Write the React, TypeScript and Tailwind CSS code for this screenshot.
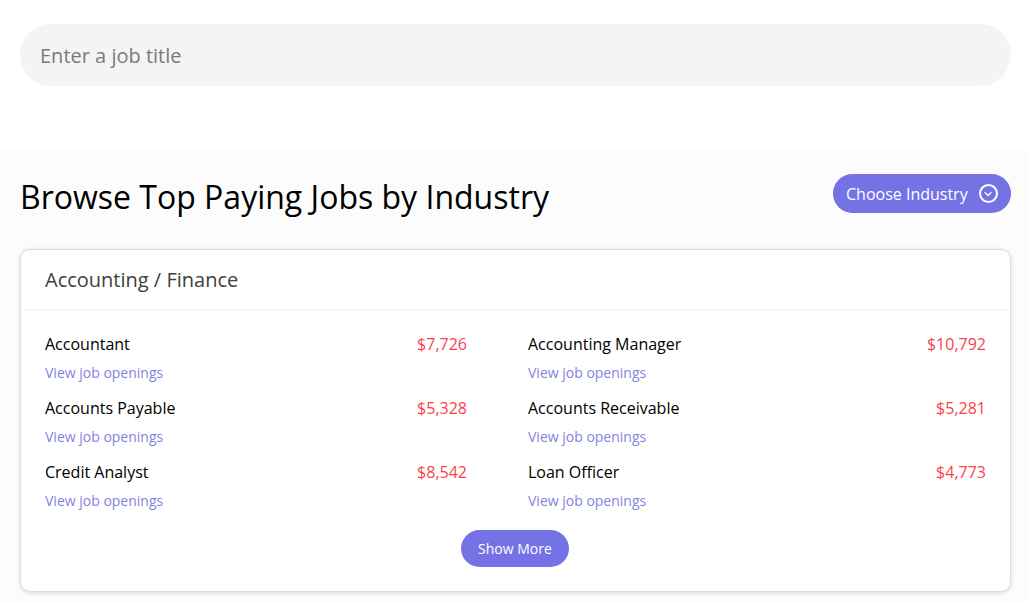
import React from 'react';
import { ChevronDown } from 'lucide-react';

const jobs = [
    { title: 'Accountant', pay: '$7,726' },
    { title: 'Accounting Manager', pay: '$10,792' },
    { title: 'Accounts Payable', pay: '$5,328' },
    { title: 'Accounts Receivable', pay: '$5,281' },
    { title: 'Credit Analyst', pay: '$8,542' },
    { title: 'Loan Officer', pay: '$4,773' },
];

const App: React.FC = () => {
    return (
        <div className="h-[602px] overflow-hidden bg-white font-['Open_Sans',sans-serif]">
            <div className="h-[150px] px-5 pt-6">
                <div className="h-[62px] w-[991px] rounded-full bg-[#f4f4f4] pl-5 pt-[2px] flex items-center text-[20px] text-[#7a7a7a]">
                    Enter a job title
                </div>
            </div>
            <div className="h-[452px] bg-[#fcfcfc] px-5">
                <div className="h-[99px] flex justify-between pt-6 w-[991px]">
                    <h1 className="text-[32px] leading-[46px] text-black">Browse Top Paying Jobs by Industry</h1>
                    <button className="h-[39px] w-[178px] rounded-full bg-[#7572e5] text-white text-[16px] pl-[13px] flex items-center gap-[11px]">
                        Choose Industry
                        <span className="w-[19px] h-[19px] rounded-full border-2 border-white flex items-center justify-center">
                            <ChevronDown className="w-[12px] h-[12px]" strokeWidth={2.5} />
                        </span>
                    </button>
                </div>
                <div className="w-[991px] h-[343px] rounded-[10px] border border-[#dcdcdc] bg-white shadow-[0_1px_4px_rgba(0,0,0,0.15)]">
                    <div className="h-[60px] px-6 flex items-center border-b border-[#f3f3f3] text-[20px] font-medium text-[#404040]">
                        Accounting / Finance
                    </div>
                    <div className="grid grid-cols-[422px_458px] pl-6 pt-5 gap-x-[61px]">
                        {jobs.map((job) => (
                            <div key={job.title} className="h-16">
                                <div className="flex justify-between text-[16px] leading-[28px]">
                                    <span className="text-black">{job.title}</span>
                                    <span className="text-[#fb3f4c]">{job.pay}</span>
                                </div>
                                <div className="text-[14px] leading-[30px] text-[#8582e2]">View job openings</div>
                            </div>
                        ))}
                    </div>
                    <div className="flex justify-center pt-2">
                        <button className="h-[37px] w-[108px] -ml-[1px] rounded-full bg-[#7572e5] text-white text-[14px] font-medium">Show More</button>
                    </div>
                </div>
            </div>
        </div>
    );
};

export default App;
